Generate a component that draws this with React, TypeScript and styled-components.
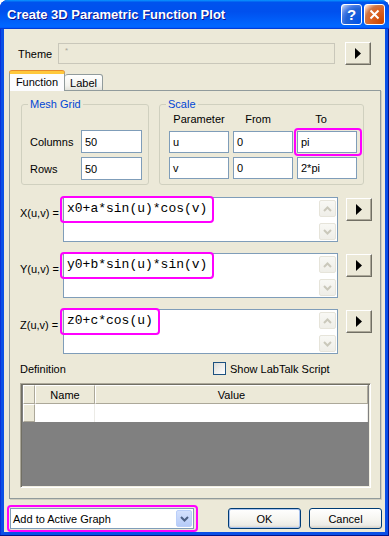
import React from "react";
import styled, { createGlobalStyle, css } from "styled-components";

const GlobalStyle = createGlobalStyle`
  html, body {
    margin: 0;
    padding: 0;
    background: #ffffff;
  }
  body {
    font-family: "Liberation Sans", Arial, sans-serif;
    font-size: 11px;
    color: #000;
  }
  * {
    box-sizing: border-box;
  }
`;

const Window = styled.div`
  width: 389px;
  height: 536px;
  display: flex;
  flex-direction: column;
  background: #0a4fe6;
  border-radius: 8px 8px 0 0;
  overflow: hidden;
  box-shadow: inset -1px -1px #00138c, inset 1px 0 #0831d9;
`;

const TitleBar = styled.div`
  height: 29px;
  flex: none;
  display: flex;
  align-items: center;
  padding: 0 4px 1px 7px;
  background: linear-gradient(
    180deg,
    #0997ff 0%,
    #0053ee 8%,
    #0050ee 40%,
    #0066ff 88%,
    #0066ff 93%,
    #005bff 95%,
    #003dd7 96%,
    #003dd7 100%
  );
  color: #fff;
  font: bold 13px "Liberation Sans", Arial, sans-serif;
  text-shadow: 1px 1px #0f1089;
`;

const Title = styled.span`
  flex: 1;
`;

const CaptionButton = styled.div<{ $kind: "help" | "close" }>`
  width: 21px;
  height: 21px;
  margin-left: 2px;
  border: 1px solid #fff;
  border-radius: 3px;
  display: flex;
  align-items: center;
  justify-content: center;
  font: bold 15px "Liberation Sans", Arial, sans-serif;
  text-shadow: none;
  background: ${(p) =>
    p.$kind === "close"
      ? "radial-gradient(circle at 90% 90%, #cc4600 0%, #dc6527 55%, #cd7546 70%, #ffccb2 90%, #fff 100%)"
      : "radial-gradient(circle at 90% 90%, #0054e9 0%, #2263d5 55%, #4479e4 70%, #a3bbec 90%, #fff 100%)"};
`;

const Body = styled.div`
  flex: 1;
  margin: 0 4px 4px;
  background: #ece9d8;
  display: flex;
  flex-direction: column;
`;

const ThemeRow = styled.div`
  margin: 13px 0 0 14px;
  height: 23px;
  display: flex;
  align-items: center;
`;

const ThemeLabel = styled.span`
  width: 40px;
`;

const ThemeBox = styled.div`
  width: 277px;
  height: 21px;
  border: 1px solid #c9c7ba;
  background: #ece9d8;
  color: #a8a698;
  font-size: 8px;
  padding: 2px 0 0 6px;
`;

const PlayButton = styled.div<{ $gap: number }>`
  width: 26px;
  height: 23px;
  flex: none;
  margin-left: ${(p) => p.$gap}px;
  background: #ece9d8;
  border: 1px solid;
  border-color: #fff #716f64 #716f64 #fff;
  box-shadow: inset -1px -1px #aca899;
  display: flex;
  align-items: center;
  justify-content: center;
`;

const TabStrip = styled.div`
  margin: 6px 0 -1px 5px;
  height: 20px;
  display: flex;
  align-items: flex-end;
  position: relative;
  z-index: 1;
`;

const Tab = styled.div<{ $active?: boolean }>`
  display: flex;
  align-items: center;
  justify-content: center;
  border: 1px solid #919b9c;
  border-radius: 3px 3px 0 0;
  ${(p) =>
    p.$active
      ? css`
          width: 56px;
          height: 20px;
          border-bottom: none;
          border-top: 3px solid #ffc83c;
          box-shadow: 0 -1px #e68b2c;
          background: #fcfcfe;
          padding-bottom: 1px;
        `
      : css`
          width: 38px;
          height: 17px;
          border-left: none;
          background: linear-gradient(180deg, #fff 0%, #f3f3ef 70%, #e4e3dc 100%);
          border-bottom: 1px solid #919b9c;
          padding-top: 1px;
        `}
`;

const Panel = styled.div`
  margin-left: 5px;
  width: 372px;
  height: 409px;
  border: 1px solid #919b9c;
  box-shadow: 1px 1px #d0cebf;
  background: #ece9d8;
  padding-top: 7px;
  display: flex;
  flex-direction: column;
`;

const GroupRow = styled.div`
  display: flex;
  gap: 10px;
  margin-left: 11px;
`;

const Group = styled.fieldset<{ $width: number }>`
  width: ${(p) => p.$width}px;
  height: 87px;
  margin: 0;
  padding: 0 8px;
  min-width: 0;
  border: 1px solid #d0d0bf;
  border-radius: 3px;
`;

const Legend = styled.legend`
  margin-left: -2px;
  padding: 0 2px;
  line-height: 13px;
  font-size: 11px;
  color: #0046d5;
`;

const MeshGrid = styled.div`
  margin-top: 19px;
  display: grid;
  grid-template-columns: 51px 61px;
  grid-auto-rows: 23px;
  row-gap: 4px;
  align-items: center;
`;

const ScaleGrid = styled.div`
  margin: 1px 0 0 1px;
  display: grid;
  grid-template-columns: repeat(3, 60px);
  grid-template-rows: 15px 22px 22px;
  column-gap: 4px;
  row-gap: 4px;
`;

const ColHead = styled.span<{ $nudge: number }>`
  text-align: center;
  line-height: 15px;
  padding-right: ${(p) => p.$nudge}px;
`;

const TextInput = styled.div`
  width: 100%;
  height: 100%;
  border: 1px solid #7f9db9;
  background: #fff;
  padding-left: 3px;
  display: flex;
  align-items: center;
`;

const Marked = styled.div<{ $inset: string }>`
  position: relative;
  display: inline-block;
  &::after {
    content: "";
    position: absolute;
    inset: ${(p) => p.$inset};
    border: 2px solid #ff00ff;
    border-radius: 4px;
    pointer-events: none;
  }
`;

const FormulaList = styled.div`
  margin-top: 12px;
  display: flex;
  flex-direction: column;
  gap: 11px;
`;

const FormulaRow = styled.div`
  display: flex;
  align-items: flex-start;
  margin-left: 10px;
`;

const FormulaLabel = styled.span`
  width: 43px;
  padding-top: 10px;
  line-height: 13px;
`;

const Editor = styled.div`
  width: 275px;
  height: 45px;
  border: 1px solid #7f9db9;
  background: #fff;
  display: flex;
`;

const Code = styled.div`
  flex: 1;
  padding: 3px 0 0 3px;
  font: 13px/16px "Liberation Mono", "Courier New", monospace;
`;

const ScrollColumn = styled.div`
  width: 19px;
  display: flex;
  flex-direction: column;
  justify-content: space-between;
  padding: 2px 1px 1px 1px;
`;

const ScrollButton = styled.div`
  width: 17px;
  height: 17px;
  border: 1px solid #e6e4da;
  border-radius: 2px;
  background: linear-gradient(180deg, #f8f8f4, #efeee8);
  display: flex;
  align-items: center;
  justify-content: center;
`;

const DefinitionRow = styled.div`
  margin: 7px 0 0 10px;
  height: 15px;
  display: flex;
  align-items: center;
`;

const DefinitionLabel = styled.span`
  width: 193px;
`;

const CheckBox = styled.span`
  width: 13px;
  height: 13px;
  margin-right: 4px;
  border: 1px solid #1c5180;
  background: linear-gradient(135deg, #dcdcd7, #ffffff);
`;

const Table = styled.div`
  margin: 7px 0 0 10px;
  width: 351px;
  height: 105px;
  border: 1px solid;
  border-color: #aca899 #fff #fff #aca899;
  box-shadow: inset 1px 1px #716f64, inset -1px -1px #f1efe2;
  background: #808080;
  padding: 1px 2px 1px 2px;
`;

const TableRow = styled.div<{ $head?: boolean }>`
  display: grid;
  grid-template-columns: 12px 60px 1fr;
  height: ${(p) => (p.$head ? 19 : 18)}px;
`;

const Cell = styled.div<{ $kind: "head" | "stub" | "data" }>`
  display: flex;
  align-items: center;
  justify-content: center;
  ${(p) =>
    p.$kind === "data"
      ? css`
          background: #fff;
          border-right: 1px solid #ecebe6;
        `
      : css`
          background: #ece9d8;
          border-left: 1px solid #fff;
          border-top: 1px solid #fff;
          border-right: 1px solid #aca899;
          border-bottom: 1px solid #aca899;
        `}
`;

const BottomBar = styled.div`
  margin: 9px 0 0 6px;
  display: flex;
  align-items: center;
`;

const Combo = styled.div`
  width: 184px;
  height: 21px;
  border: 1px solid #7f9db9;
  background: #fff;
  padding: 0 1px 0 2px;
  display: flex;
  align-items: center;
`;

const ComboText = styled.span`
  flex: 1;
`;

const ComboArrow = styled.div`
  width: 16px;
  height: 17px;
  border: 1px solid #bacffa;
  border-radius: 2px;
  background: linear-gradient(180deg, #d4e1fd, #b6cbf8);
  display: flex;
  align-items: center;
  justify-content: center;
`;

const DialogButton = styled.div<{ $gap: number; $default?: boolean }>`
  width: 73px;
  height: 21px;
  margin-left: ${(p) => p.$gap}px;
  border: 1px solid #003c74;
  border-radius: 3px;
  background: linear-gradient(180deg, #fff 0%, #f6f5f0 55%, #ecebe6 85%, #d6d0c5 100%);
  display: flex;
  align-items: center;
  justify-content: center;
  ${(p) =>
    p.$default &&
    css`
      box-shadow: inset 0 0 0 1px #a9c3ef;
    `}
`;

function Triangle() {
  return (
    <svg width="6" height="11" viewBox="0 0 6 11">
      <polygon points="0,0 6,5.5 0,11" fill="#000" />
    </svg>
  );
}

function Chevron({ up, color }: { up?: boolean; color: string }) {
  return (
    <svg width="9" height="6" viewBox="0 0 9 6">
      <polyline
        points={up ? "1,5 4.5,1.5 8,5" : "1,1 4.5,4.5 8,1"}
        fill="none"
        stroke={color}
        strokeWidth="2"
      />
    </svg>
  );
}

const formulas = [
  { label: "X(u,v) =", expr: "x0+a*sin(u)*cos(v)" },
  { label: "Y(u,v) =", expr: "y0+b*sin(u)*sin(v)" },
  { label: "Z(u,v) =", expr: "z0+c*cos(u)" },
];

export default function App() {
  return (
    <>
      <GlobalStyle />
      <Window>
        <TitleBar>
          <Title>Create 3D Parametric Function Plot</Title>
          <CaptionButton $kind="help">?</CaptionButton>
          <CaptionButton $kind="close">
            <svg width="11" height="11" viewBox="0 0 11 11">
              <path d="M1.5 1.5 L9.5 9.5 M9.5 1.5 L1.5 9.5" stroke="#fff" strokeWidth="2" />
            </svg>
          </CaptionButton>
        </TitleBar>
        <Body>
          <ThemeRow>
            <ThemeLabel>Theme</ThemeLabel>
            <ThemeBox>*</ThemeBox>
            <PlayButton $gap={10}>
              <Triangle />
            </PlayButton>
          </ThemeRow>

          <TabStrip>
            <Tab $active>Function</Tab>
            <Tab>Label</Tab>
          </TabStrip>

          <Panel>
            <GroupRow>
              <Group $width={128}>
                <Legend>Mesh Grid</Legend>
                <MeshGrid>
                  <span>Columns</span>
                  <TextInput>50</TextInput>
                  <span>Rows</span>
                  <TextInput>50</TextInput>
                </MeshGrid>
              </Group>
              <Group $width={205}>
                <Legend>Scale</Legend>
                <ScaleGrid>
                  <ColHead $nudge={0}>Parameter</ColHead>
                  <ColHead $nudge={10}>From</ColHead>
                  <ColHead $nudge={12}>To</ColHead>
                  <TextInput>u</TextInput>
                  <TextInput>0</TextInput>
                  <Marked $inset="-3px -5px -3px -3px">
                    <TextInput>pi</TextInput>
                  </Marked>
                  <TextInput>v</TextInput>
                  <TextInput>0</TextInput>
                  <TextInput>2*pi</TextInput>
                </ScaleGrid>
              </Group>
            </GroupRow>

            <FormulaList>
              {formulas.map((f) => (
                <FormulaRow key={f.label}>
                  <FormulaLabel>{f.label}</FormulaLabel>
                  <Editor>
                    <Code>
                      <Marked $inset="-5px -7px -6px -7px">{f.expr}</Marked>
                    </Code>
                    <ScrollColumn>
                      <ScrollButton>
                        <Chevron up color="#cac8bb" />
                      </ScrollButton>
                      <ScrollButton>
                        <Chevron color="#cac8bb" />
                      </ScrollButton>
                    </ScrollColumn>
                  </Editor>
                  <PlayButton $gap={8} style={{ marginTop: 1 }}>
                    <Triangle />
                  </PlayButton>
                </FormulaRow>
              ))}
            </FormulaList>

            <DefinitionRow>
              <DefinitionLabel>Definition</DefinitionLabel>
              <CheckBox />
              <span>Show LabTalk Script</span>
            </DefinitionRow>

            <Table>
              <TableRow $head>
                <Cell $kind="head" />
                <Cell $kind="head">Name</Cell>
                <Cell $kind="head">Value</Cell>
              </TableRow>
              <TableRow>
                <Cell $kind="stub" />
                <Cell $kind="data" />
                <Cell $kind="data" />
              </TableRow>
            </Table>
          </Panel>

          <BottomBar>
            <Marked $inset="-3px -4px -3px -3px">
              <Combo>
                <ComboText>Add to Active Graph</ComboText>
                <ComboArrow>
                  <Chevron color="#4d6185" />
                </ComboArrow>
              </Combo>
            </Marked>
            <DialogButton $gap={34} $default>
              OK
            </DialogButton>
            <DialogButton $gap={8}>Cancel</DialogButton>
          </BottomBar>
        </Body>
      </Window>
    </>
  );
}
